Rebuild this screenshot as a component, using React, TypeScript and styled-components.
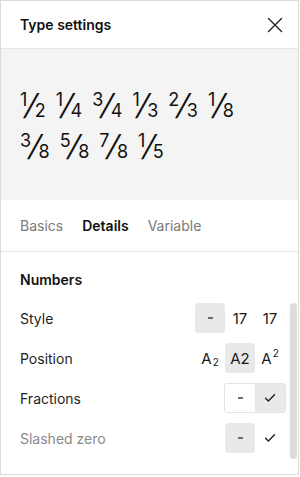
import styled, { createGlobalStyle } from "styled-components";

const GlobalStyle = createGlobalStyle`
  body {
    margin: 0;
    background: #ffffff;
    font-family: Inter, "Noto Sans", "Liberation Sans", sans-serif;
    color: #1a1a1a;
  }
`;

const Panel = styled.div`
  width: 299px;
  height: 475px;
  box-sizing: border-box;
  border: 1px solid #dadada;
  background: #ffffff;
  display: flex;
  flex-direction: column;
  overflow: hidden;
`;

const Header = styled.div`
  height: 47px;
  flex: none;
  display: flex;
  align-items: center;
  justify-content: space-between;
  padding: 0 15px 0 19px;
  border-bottom: 1px solid #e4e4e4;
`;

const Title = styled.h1`
  margin: 0;
  font-size: 14px;
  font-weight: 600;
  color: #111111;
`;

const CloseBtn = styled.button`
  border: 0;
  background: none;
  padding: 0;
  width: 16px;
  height: 16px;
  display: flex;
  align-items: center;
  justify-content: center;
  color: #222222;
`;

const Preview = styled.div`
  height: 151px;
  flex: none;
  box-sizing: border-box;
  background: #f4f4f4;
  padding: 44px 19px 0;
  display: flex;
  flex-direction: column;
  gap: 17px;
  color: #111111;
`;

const FracRow = styled.div`
  display: flex;
  gap: 10px;
`;

const Frac = styled.span`
  display: inline-flex;
  height: 24px;
  color: #111111;
`;

const Num = styled.span`
  align-self: flex-start;
  font-size: 18px;
  line-height: 13px;
  height: 13px;
`;

const Den = styled(Num)`
  align-self: flex-end;
`;

const Slash = styled.span`
  display: inline-block;
  font-size: 29px;
  font-weight: 400;
  line-height: 24px;
  margin: 0 -1.5px;
  transform: skewX(-16deg);
`;

const Tabs = styled.div`
  height: 51px;
  flex: none;
  display: flex;
  align-items: center;
  gap: 19px;
  padding-left: 19px;
  border-bottom: 1px solid #e4e4e4;
`;

const Tab = styled.span<{ $active?: boolean }>`
  font-size: 14px;
  font-weight: ${(p) => (p.$active ? 600 : 400)};
  color: ${(p) => (p.$active ? "#111111" : "#7a7a7a")};
`;

const Body = styled.div`
  flex: 1;
  display: flex;
  overflow: hidden;
`;

const Content = styled.div`
  flex: 1;
  padding: 0 5px 0 19px;
`;

const SectionTitle = styled.h2`
  margin: 0;
  height: 46px;
  box-sizing: border-box;
  padding-top: 19px;
  font-size: 14px;
  line-height: 17px;
  font-weight: 600;
  color: #111111;
`;

const Row = styled.div`
  height: 40px;
  display: flex;
  align-items: center;
  justify-content: space-between;
`;

const Label = styled.span<{ $disabled?: boolean }>`
  font-size: 14px;
  color: ${(p) => (p.$disabled ? "#8a8a8a" : "#1f1f1f")};
`;

const Segments = styled.div<{ $boxed?: boolean }>`
  display: flex;
  border: ${(p) => (p.$boxed ? "1px solid #e3e3e3" : "0")};
  border-radius: 3px;
  overflow: hidden;
  margin-right: ${(p) => (p.$boxed ? "-1px" : "0")};
`;

const Cell = styled.div<{ $active?: boolean; $short?: boolean }>`
  width: 30px;
  height: ${(p) => (p.$short ? "28px" : "30px")};
  display: flex;
  align-items: center;
  justify-content: center;
  border-radius: ${(p) => (p.$short ? "0" : "3px")};
  background: ${(p) => (p.$active ? "#e9e9e9" : "transparent")};
  font-size: 15px;
  color: #1a1a1a;
`;

const Dash = styled.span`
  display: block;
  width: 5px;
  height: 1.5px;
  background: #6e6e6e;
`;

const Script = styled.span<{ $up?: boolean }>`
  font-size: 10px;
  position: relative;
  top: ${(p) => (p.$up ? "-5px" : "4px")};
  margin-left: 1px;
`;

const Track = styled.div`
  width: 7px;
  flex: none;
  margin-right: 1px;
`;

const Thumb = styled.div`
  margin-top: 51px;
  height: 156px;
  border-radius: 4px;
  background: #dcdcdc;
`;

const rows: [string, string][][] = [
  [["1", "2"], ["1", "4"], ["3", "4"], ["1", "3"], ["2", "3"], ["1", "8"]],
  [["3", "8"], ["5", "8"], ["7", "8"], ["1", "5"]],
];

function Check() {
  return (
    <svg width="12" height="10" viewBox="0 0 12 10" fill="none">
      <path d="M1.5 5.2 L4.4 8 L10.5 1.8" stroke="#1a1a1a" strokeWidth="1.3" strokeLinecap="round" strokeLinejoin="round" />
    </svg>
  );
}

function App() {
  return (
    <>
      <GlobalStyle />
      <Panel>
        <Header>
          <Title>Type settings</Title>
          <CloseBtn aria-label="Close">
            <svg width="16" height="16" viewBox="0 0 16 16" fill="none">
              <path d="M1.5 1.5 L14.5 14.5 M14.5 1.5 L1.5 14.5" stroke="#222" strokeWidth="1.4" strokeLinecap="round" />
            </svg>
          </CloseBtn>
        </Header>
        <Preview>
          {rows.map((row, i) => (
            <FracRow key={i}>
              {row.map(([n, d], j) => (
                <Frac key={j}>
                  <Num>{n}</Num>
                  <Slash>/</Slash>
                  <Den>{d}</Den>
                </Frac>
              ))}
            </FracRow>
          ))}
        </Preview>
        <Tabs>
          <Tab>Basics</Tab>
          <Tab $active>Details</Tab>
          <Tab>Variable</Tab>
        </Tabs>
        <Body>
          <Content>
            <SectionTitle>Numbers</SectionTitle>
            <Row>
              <Label>Style</Label>
              <Segments>
                <Cell $active><Dash /></Cell>
                <Cell>17</Cell>
                <Cell>17</Cell>
              </Segments>
            </Row>
            <Row>
              <Label>Position</Label>
              <Segments>
                <Cell>A<Script>2</Script></Cell>
                <Cell $active>A2</Cell>
                <Cell>A<Script $up>2</Script></Cell>
              </Segments>
            </Row>
            <Row>
              <Label>Fractions</Label>
              <Segments $boxed>
                <Cell $short><Dash /></Cell>
                <Cell $short $active><Check /></Cell>
              </Segments>
            </Row>
            <Row>
              <Label $disabled>Slashed zero</Label>
              <Segments>
                <Cell $active><Dash /></Cell>
                <Cell><Check /></Cell>
              </Segments>
            </Row>
          </Content>
          <Track>
            <Thumb />
          </Track>
        </Body>
      </Panel>
    </>
  );
}

export default App;
